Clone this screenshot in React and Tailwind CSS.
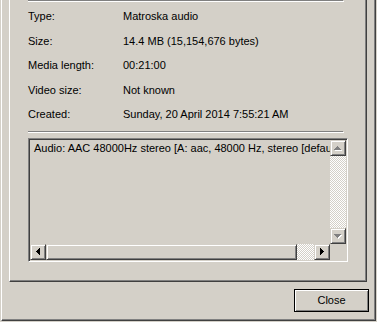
import React from 'react';

// classic raised 3D edge
const raised =
  'border border-t-[#d4d0c8] border-l-[#d4d0c8] border-b-[#404040] border-r-[#404040] shadow-[inset_1px_1px_0_#ffffff,inset_-1px_-1px_0_#808080] bg-[#d4d0c8]';

const dither =
  'bg-[repeating-conic-gradient(#ffffff_0_25%,#d4d0c8_0_50%)] bg-[length:2px_2px]';

const rows = [
  ['Type:', 'Matroska audio'],
  ['Size:', '14.4 MB (15,154,676 bytes)'],
  ['Media length:', '00:21:00'],
  ['Video size:', 'Not known'],
  ['Created:', 'Sunday, 20 April 2014 7:55:21 AM'],
];

const Arrow = ({ dir, disabled }) => {
  // small solid triangles like the classic scrollbar glyphs
  const pts = {
    up: '3.5,0 7,4 0,4',
    down: '0,0 7,0 3.5,4',
    left: '4,0 4,7 0,3.5',
    right: '0,0 4,3.5 0,7',
  }[dir];
  const vert = dir === 'up' || dir === 'down';
  const w = vert ? 7 : 4;
  const h = vert ? 4 : 7;
  return (
    <svg width={w + 1} height={h + 1} viewBox={`0 0 ${w + 1} ${h + 1}`} shapeRendering="crispEdges">
      {disabled && <polygon points={pts} fill="#ffffff" transform="translate(1,1)" />}
      <polygon points={pts} fill={disabled ? '#808080' : '#000000'} />
    </svg>
  );
};

const ScrollButton = ({ dir, disabled }) => (
  <div className={`w-[16px] h-[16px] shrink-0 flex items-center justify-center ${raised}`}>
    <Arrow dir={dir} disabled={disabled} />
  </div>
);

const Etched = () => (
  <div className="flex flex-col">
    <div className="w-[315px] h-px bg-[#808080]" />
    <div className="w-[316px] h-px bg-white" />
  </div>
);

export default function App() {
  return (
    <div
      className="w-[377px] h-[322px] bg-[#d4d0c8] pl-px overflow-hidden text-[11px] text-black"
      style={{ fontFamily: '"Liberation Sans", Arial, sans-serif' }}
    >
      <div className="w-[375px] h-[321px] border-l border-l-white border-r border-r-[#404040] border-b border-b-[#404040] shadow-[inset_-1px_-1px_0_#808080] flex flex-col">
        {/* tab page */}
        <div className="ml-[7px] w-[358px] h-[282px] border-l border-l-white border-r border-r-[#404040] border-b border-b-[#404040] shadow-[inset_-1px_-1px_0_#808080] pl-[18px] flex flex-col">
          <Etched />
          <div className="mt-[8px] flex flex-col gap-[11.5px]">
            {rows.map(([label, value]) => (
              <div key={label} className="flex h-[13px] leading-[13px]">
                <div className="w-[95px] shrink-0">{label}</div>
                <div className="whitespace-nowrap">{value}</div>
              </div>
            ))}
          </div>
          <div className="mt-[10px]">
            <Etched />
          </div>
          {/* info box */}
          <div className="mt-[5px] w-[320px] h-[124px] border border-t-[#808080] border-l-[#808080] border-b-white border-r-white shadow-[inset_1px_1px_0_#404040] p-px pl-px flex flex-col">
            <div className="flex h-[104px]">
              <div className="w-[300px] overflow-hidden whitespace-nowrap pl-[4px] pt-[2px] leading-[13px]">
                Audio: AAC 48000Hz stereo [A: aac, 48000 Hz, stereo [default]]
              </div>
              <div className="w-[16px] flex flex-col">
                <ScrollButton dir="up" disabled />
                <div className={`flex-1 ${dither}`} />
                <ScrollButton dir="down" disabled />
              </div>
            </div>
            <div className="flex h-[16px]">
              <ScrollButton dir="left" />
              <div className={`w-[251px] h-[16px] ${raised}`} />
              <div className={`w-[17px] h-[16px] ${dither}`} />
              <ScrollButton dir="right" />
              <div className="w-[16px] h-[16px] bg-[#d4d0c8]" />
            </div>
          </div>
        </div>
        <div className="mt-[7px] flex justify-end pr-[6px]">
          <button className="w-[75px] h-[23px] border border-black shadow-[inset_1px_1px_0_#ffffff,inset_-1px_-1px_0_#808080] bg-[#d4d0c8] text-[11px] leading-[13px] flex items-center justify-center">
            Close
          </button>
        </div>
      </div>
    </div>
  );
}
